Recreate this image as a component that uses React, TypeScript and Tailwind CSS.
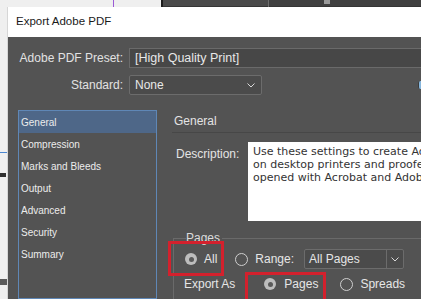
import React from "react";

const Checked = () => (
  <span className="w-[12px] h-[12px] rounded-full bg-[#bdbdbd] flex items-center justify-center shrink-0">
    <span className="w-[5px] h-[5px] rounded-full bg-[#5a5a5a]" />
  </span>
);

const Unchecked = () => (
  <span className="w-[13px] h-[13px] rounded-full border border-[#cfcfcf] shrink-0" />
);

const Chevron = () => (
  <svg width="8" height="5" viewBox="0 0 8 5" className="shrink-0">
    <path d="M0.5 0.5 L4 4 L7.5 0.5" fill="none" stroke="#d8d8d8" strokeWidth="1" />
  </svg>
);

const listItems = ["General", "Compression", "Marks and Bleeds", "Output", "Advanced", "Security", "Summary"];

export default function App() {
  return (
    <div className="relative w-[421px] h-[299px] overflow-hidden bg-[#efefef] flex flex-col font-['Liberation_Sans',Arial,sans-serif]">
      {/* top background strip */}
      <div className="h-[7px] flex shrink-0">
        <div className="w-[161px] bg-[#efefef] flex">
          <div className="w-[113px]" />
          <div className="w-px bg-[#9b5ad6]" />
        </div>
        <div className="w-[2px] bg-[#1c1c1c]" />
        <div className="w-[105px] bg-[#4a4a4a] border-b border-[#353535]" />
        <div className="w-px bg-[#6e6e6e]" />
        <div className="flex-1 bg-[#404040] border-b border-[#353535] flex">
          <div className="w-[55px]" />
          <div className="w-[6px] h-[4px] bg-[#9a9a9a]" />
        </div>
      </div>

      <div className="flex flex-1 min-h-0">
        {/* left background strip */}
        <div className="w-[7px] bg-[#efefef] flex flex-col shrink-0">
          <div className="h-[145px]" />
          <div className="h-px bg-[#4a86d0]" />
          <div className="h-[20px]" />
          <div className="h-[4px] w-[6px] bg-[#2f2f2f]" />
          <div className="h-[102px]" />
          <div className="h-[6px] w-[7px] bg-[#5a5a5a]" />
        </div>

        {/* dialog */}
        <div className="w-[414px] flex flex-col border-l border-[#d6d6d6] shrink-0 overflow-hidden">
          <div className="h-[30px] bg-white flex items-center pl-[8px] shrink-0">
            <span className="text-[11.5px] text-[#1a1a1a] leading-none">Export Adobe PDF</span>
          </div>

          <div className="flex-1 bg-[#535353] flex flex-col min-h-0">
            {/* preset row */}
            <div className="flex items-center mt-[11px] h-[20px]">
              <div className="w-[115px] text-right text-[12px] text-[#e2e2e2] leading-none shrink-0">Adobe PDF Preset:</div>
              <div className="ml-[6px] flex-1 h-[20px] bg-[#474747] border-y border-l border-[#6a6a6a] pl-[5px] flex items-center text-[12.5px] text-[#e8e8e8]">
                [High Quality Print]
              </div>
            </div>

            {/* standard row */}
            <div className="flex items-center mt-[7px] h-[20px]">
              <div className="w-[115px] text-right text-[12px] text-[#e2e2e2] leading-none shrink-0">Standard:</div>
              <div className="ml-[6px] w-[133px] h-[20px] bg-[#4b4b4b] border border-[#6c6c6c] rounded-[2px] pl-[5px] pr-[6px] flex items-center justify-between text-[12px] text-[#e8e8e8] shrink-0">
                <span>None</span>
                <Chevron />
              </div>
              <div className="ml-[156px] w-[5px] h-[8px] bg-[#86b6dc] rounded-l-[2px] border-l border-[#3a3a3a] shrink-0" />
            </div>

            {/* main area */}
            <div className="flex mt-[15px] flex-1 min-h-0">
              <div className="ml-[10px] w-[139px] border border-[#5f87b6] flex flex-col shrink-0">
                {listItems.map((it, i) => (
                  <div
                    key={it}
                    className={
                      i === 0
                        ? "h-[22px] bg-[#4e6788] flex items-center pl-[2px] text-[10px] text-[#ececec]"
                        : "h-[22px] flex items-center pl-[2px] text-[10px] text-[#ececec]"
                    }
                  >
                    {it}
                  </div>
                ))}
              </div>

              <div className="ml-[15px] flex-1 flex flex-col min-w-0">
                <div className="h-[23px] border-b border-[#474747] flex items-center pl-[2px] shrink-0">
                  <span className="text-[12px] text-[#e4e4e4]">General</span>
                </div>

                <div className="flex mt-[9px] shrink-0">
                  <div className="w-[76px] pl-[4px] mt-[6px] text-[12px] leading-[12px] text-[#e4e4e4] shrink-0">Description:</div>
                  <div className="flex-1 min-w-0 h-[79px] bg-white pl-[5px] pt-[3px] overflow-hidden whitespace-nowrap font-['DejaVu_Sans',sans-serif] text-[11px] leading-[13px] text-[#333333]">
                    <div>Use these settings to create Adobe PDF documents for quality printing</div>
                    <div>on desktop printers and proofers. Created PDF documents can be</div>
                    <div>opened with Acrobat and Adobe Reader 5.0 and later.</div>
                  </div>
                </div>

                <fieldset className="mt-[10px] ml-[1px] mr-[-20px] border border-[#6a6a6a] pb-[20px]">
                  <legend className="ml-[12px] pr-[2px] text-[12px] leading-[14px] text-[#dcdcdc]">Pages</legend>
                  <div className="flex items-center h-[20px] mt-[4px] pl-[11px] text-[12px] text-[#e6e6e6]">
                    <Checked />
                    <span className="ml-[7px]">All</span>
                    <span className="ml-[18px] flex"><Unchecked /></span>
                    <span className="ml-[7px]">Range:</span>
                    <div className="ml-[10px] w-[100px] h-[20px] border border-[#6c6c6c] rounded-[2px] bg-[#4b4b4b] flex items-center shrink-0">
                      <span className="flex-1 pl-[4px]">All Pages</span>
                      <div className="w-px h-full bg-[#6c6c6c]" />
                      <div className="w-[16px] flex items-center justify-center"><Chevron /></div>
                    </div>
                  </div>
                  <div className="flex items-center h-[20px] mt-[5px] pl-[10px] text-[12px] text-[#e6e6e6]">
                    <span>Export As</span>
                    <span className="ml-[29px] flex"><Checked /></span>
                    <span className="ml-[8px]">Pages</span>
                    <span className="ml-[22px] flex"><Unchecked /></span>
                    <span className="ml-[7px]">Spreads</span>
                  </div>
                </fieldset>
              </div>
            </div>
          </div>
        </div>
      </div>

      {/* red annotation boxes */}
      <div className="absolute left-[168px] top-[241px] w-[56px] h-[35px] border-[3px] border-[#d3212d]" />
      <div className="absolute left-[245px] top-[272px] w-[81px] h-[32px] border-[3px] border-[#d3212d]" />
    </div>
  );
}
